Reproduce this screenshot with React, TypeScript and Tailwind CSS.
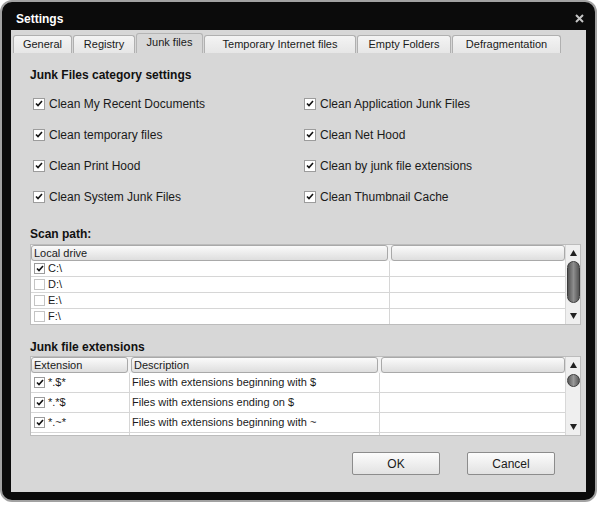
import React from "react";

const font = { fontFamily: '"Liberation Sans", Arial, sans-serif' };

function Check({ checked, size = 12 }: { checked: boolean; size?: number }) {
  return (
    <span
      className={`flex items-center justify-center bg-white border shrink-0 ${
        checked ? "border-[#9c9c9c]" : "border-[#c4c4c4]"
      }`}
      style={{ width: size, height: size }}
    >
      {checked && (
        <svg width="8" height="7" viewBox="0 0 8 7">
          <path d="M1 3.5 L3 5.5 L7 1" fill="none" stroke="#111" strokeWidth="1.6" />
        </svg>
      )}
    </span>
  );
}

function HeaderCell({ label, className }: { label?: string; className: string }) {
  return (
    <div
      className={`h-[16px] rounded-[3px] border border-[#a9a9a9] bg-gradient-to-b from-[#fbfbfb] to-[#dedede] text-[11px] leading-[14px] pl-[2px] text-[#1a1a1a] ${className}`}
    >
      {label}
    </div>
  );
}

function ScrollBar({ round }: { round?: boolean }) {
  return (
    <div className="w-[15px] bg-[#efefef] border-l border-[#d8d8d8] flex flex-col items-center">
      <svg width="7" height="6" viewBox="0 0 7 6" className="mt-[5px]">
        <path d="M3.5 0 L7 6 L0 6 Z" fill="#222" />
      </svg>
      {round ? (
        <div className="mt-[6px] w-[13px] h-[13px] rounded-full border border-[#3c3c3c] bg-gradient-to-r from-[#5b5b5b] via-[#9a9a9a] to-[#5b5b5b]" />
      ) : (
        <div className="mt-[5px] w-[13px] h-[42px] rounded-[7px] border border-[#3c3c3c] bg-gradient-to-r from-[#555] via-[#8e8e8e] to-[#555]" />
      )}
      <div className="flex-1" />
      <svg width="7" height="6" viewBox="0 0 7 6" className="mb-[5px]">
        <path d="M0 0 L7 0 L3.5 6 Z" fill="#222" />
      </svg>
    </div>
  );
}

const tabs = [
  { label: "General", w: 59 },
  { label: "Registry", w: 62 },
  { label: "Junk files", w: 67, active: true },
  { label: "Temporary Internet files", w: 152 },
  { label: "Empty Folders", w: 94 },
  { label: "Defragmentation", w: 109 },
];

const options = [
  ["Clean My Recent Documents", "Clean Application Junk Files"],
  ["Clean temporary files", "Clean Net Hood"],
  ["Clean Print Hood", "Clean by junk file extensions"],
  ["Clean System Junk Files", "Clean Thumbnail Cache"],
];

const drives = [
  { name: "C:\\", checked: true },
  { name: "D:\\", checked: false },
  { name: "E:\\", checked: false },
  { name: "F:\\", checked: false },
];

const exts = [
  { ext: "*.$*", desc: "Files with extensions beginning with $" },
  { ext: "*.*$", desc: "Files with extensions ending on $" },
  { ext: "*.~*", desc: "Files with extensions beginning with ~" },
];

export default function App() {
  return (
    <div className="w-[598px] h-[507px] bg-white" style={font}>
      <div className="w-[597px] h-[502px] rounded-[12px] border-2 border-[#a2a2a2] bg-[#0b0b0b] flex flex-col px-[9px] pb-[8px]">
        {/* Title bar */}
        <div className="h-[28px] flex items-center justify-between pl-[5px] pr-[2px] pt-[5px]">
          <span className="text-white font-bold text-[12px]">Settings</span>
          <svg width="9" height="9" viewBox="0 0 9 9">
            <path d="M1 1 L8 8 M8 1 L1 8" stroke="#c4c4c4" strokeWidth="2" />
          </svg>
        </div>

        {/* Panel */}
        <div className="flex-1 bg-[#d7d7d7] flex flex-col">
          {/* Tabs */}
          <div className="flex items-end gap-[1px] pl-[2px] h-[23px]">
            {tabs.map((t) => (
              <div
                key={t.label}
                className={`flex items-center justify-center rounded-t-[3px] border border-b-0 text-[11px] text-[#1a1a1a] ${
                  t.active
                    ? "h-[20px] bg-[#d7d7d7] border-[#b4b4b4] pb-[2px]"
                    : "h-[18px] bg-gradient-to-b from-[#f4f4f4] to-[#e6e6e6] border-[#b0b0b0]"
                }`}
                style={{ width: t.w }}
              >
                {t.label}
              </div>
            ))}
          </div>

          <div className="flex flex-col pl-[19px] pr-[4px]">
            <div className="mt-[13px] h-[16px] text-[12px] font-bold text-[#111]">
              Junk Files category settings
            </div>

            <div className="mt-[6px] flex flex-col">
              {options.map((row, i) => (
                <div key={i} className="h-[31px] flex items-center">
                  {row.map((label, j) => (
                    <div
                      key={label}
                      className={`flex items-center gap-[4px] ${j === 0 ? "w-[271px] ml-[3px]" : ""}`}
                    >
                      <Check checked />
                      <span className="text-[12px] text-[#1a1a1a]">{label}</span>
                    </div>
                  ))}
                </div>
              ))}
            </div>

            <div className="mt-[13px] h-[16px] text-[12px] font-bold text-[#111]">Scan path:</div>

            {/* Scan path table */}
            <div className="mt-[3px] h-[81px] w-[551px] border border-[#bcbcbc] bg-white flex">
              <div className="flex-1 flex flex-col overflow-hidden">
                <div className="flex gap-[3px] bg-[#f2f2f2]">
                  <HeaderCell label="Local drive" className="w-[357px]" />
                  <HeaderCell className="flex-1" />
                </div>
                {drives.map((d) => (
                  <div key={d.name} className="h-[16px] shrink-0 flex border-b border-[#d6d6d6] text-[11px] text-[#1a1a1a]">
                    <div className="w-[359px] flex items-center gap-[3px] pl-[3px] border-r border-[#d6d6d6]">
                      <Check checked={d.checked} size={11} />
                      <span>{d.name}</span>
                    </div>
                    <div className="flex-1" />
                  </div>
                ))}
              </div>
              <ScrollBar />
            </div>

            <div className="mt-[13px] h-[16px] text-[12px] font-bold text-[#111]">Junk file extensions</div>

            {/* Extensions table */}
            <div className="mt-[2px] h-[80px] w-[551px] border border-[#bcbcbc] bg-white flex">
              <div className="flex-1 flex flex-col overflow-hidden">
                <div className="flex gap-[3px] bg-[#f2f2f2]">
                  <HeaderCell label="Extension" className="w-[97px]" />
                  <HeaderCell label="Description" className="w-[247px]" />
                  <HeaderCell className="flex-1" />
                </div>
                {exts.map((e) => (
                  <div key={e.ext} className="h-[20px] shrink-0 flex border-b border-[#d6d6d6] text-[11px] text-[#1a1a1a]">
                    <div className="w-[99px] flex items-center gap-[3px] pl-[3px] border-r border-[#d6d6d6]">
                      <Check checked size={11} />
                      <span>{e.ext}</span>
                    </div>
                    <div className="w-[250px] flex items-center pl-[2px] border-r border-[#d6d6d6]">{e.desc}</div>
                    <div className="flex-1" />
                  </div>
                ))}
                <div className="flex-1 flex">
                  <div className="w-[99px] border-r border-[#d6d6d6]" />
                  <div className="w-[250px] border-r border-[#d6d6d6]" />
                </div>
              </div>
              <ScrollBar round />
            </div>

            {/* Buttons */}
            <div className="mt-[16px] flex justify-end gap-[27px] pr-[27px]">
              {["OK", "Cancel"].map((b) => (
                <button
                  key={b}
                  className="w-[88px] h-[23px] rounded-[2px] border border-[#8c8c8c] bg-gradient-to-b from-[#fcfcfc] to-[#e2e2e2] text-[12px] text-[#1a1a1a]"
                >
                  {b}
                </button>
              ))}
            </div>
          </div>
        </div>
      </div>
    </div>
  );
}
